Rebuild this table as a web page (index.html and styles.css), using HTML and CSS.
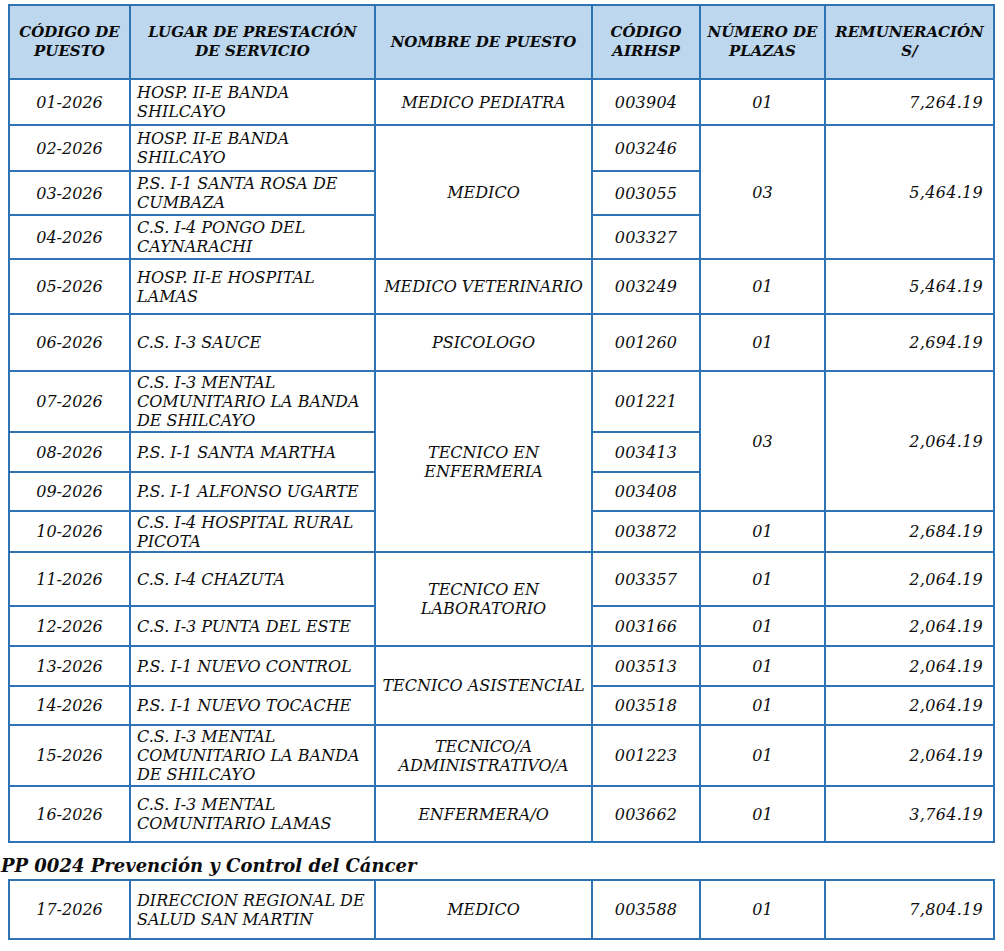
FILE: index.html
```html
<!DOCTYPE html>
<html lang="es">
<head>
<meta charset="utf-8">
<title>Puestos</title>
<link rel="stylesheet" href="styles.css">
</head>
<body>
<table class="grid">
  <colgroup>
    <col class="c1"><col class="c2"><col class="c3"><col class="c4"><col class="c5"><col class="c6">
  </colgroup>
  <thead>
    <tr class="h74">
      <th>CÓDIGO DE<br>PUESTO</th>
      <th>LUGAR DE PRESTACIÓN<br>DE SERVICIO</th>
      <th>NOMBRE DE PUESTO</th>
      <th>CÓDIGO<br>AIRHSP</th>
      <th>NÚMERO DE<br>PLAZAS</th>
      <th>REMUNERACIÓN<br>S/</th>
    </tr>
  </thead>
  <tbody>
    <tr class="h46">
      <td class="code">01-2026</td><td class="place">HOSP. II-E BANDA<br>SHILCAYO</td><td class="name">MEDICO PEDIATRA</td><td class="air">003904</td><td class="num">01</td><td class="pay">7,264.19</td>
    </tr>
    <tr class="h46">
      <td class="code">02-2026</td><td class="place">HOSP. II-E BANDA<br>SHILCAYO</td><td class="name" rowspan="3">MEDICO</td><td class="air">003246</td><td class="num" rowspan="3">03</td><td class="pay" rowspan="3">5,464.19</td>
    </tr>
    <tr class="h44">
      <td class="code">03-2026</td><td class="place">P.S. I-1 SANTA ROSA DE<br>CUMBAZA</td><td class="air">003055</td>
    </tr>
    <tr class="h44">
      <td class="code">04-2026</td><td class="place">C.S. I-4 PONGO DEL<br>CAYNARACHI</td><td class="air">003327</td>
    </tr>
    <tr class="h55">
      <td class="code">05-2026</td><td class="place">HOSP. II-E HOSPITAL<br>LAMAS</td><td class="name">MEDICO VETERINARIO</td><td class="air">003249</td><td class="num">01</td><td class="pay">5,464.19</td>
    </tr>
    <tr class="h57">
      <td class="code">06-2026</td><td class="place">C.S. I-3 SAUCE</td><td class="name">PSICOLOGO</td><td class="air">001260</td><td class="num">01</td><td class="pay">2,694.19</td>
    </tr>
    <tr class="h61">
      <td class="code">07-2026</td><td class="place">C.S. I-3 MENTAL<br>COMUNITARIO LA BANDA<br>DE SHILCAYO</td><td class="name" rowspan="4">TECNICO EN<br>ENFERMERIA</td><td class="air">001221</td><td class="num" rowspan="3">03</td><td class="pay" rowspan="3">2,064.19</td>
    </tr>
    <tr class="h40">
      <td class="code">08-2026</td><td class="place">P.S. I-1 SANTA MARTHA</td><td class="air">003413</td>
    </tr>
    <tr class="h39">
      <td class="code">09-2026</td><td class="place">P.S. I-1 ALFONSO UGARTE</td><td class="air">003408</td>
    </tr>
    <tr class="h41">
      <td class="code">10-2026</td><td class="place">C.S. I-4 HOSPITAL RURAL<br>PICOTA</td><td class="air">003872</td><td class="num">01</td><td class="pay">2,684.19</td>
    </tr>
    <tr class="h54">
      <td class="code">11-2026</td><td class="place">C.S. I-4 CHAZUTA</td><td class="name" rowspan="2">TECNICO EN<br>LABORATORIO</td><td class="air">003357</td><td class="num">01</td><td class="pay">2,064.19</td>
    </tr>
    <tr class="h40">
      <td class="code">12-2026</td><td class="place">C.S. I-3 PUNTA DEL ESTE</td><td class="air">003166</td><td class="num">01</td><td class="pay">2,064.19</td>
    </tr>
    <tr class="h40">
      <td class="code">13-2026</td><td class="place">P.S. I-1 NUEVO CONTROL</td><td class="name" rowspan="2">TECNICO ASISTENCIAL</td><td class="air">003513</td><td class="num">01</td><td class="pay">2,064.19</td>
    </tr>
    <tr class="h39">
      <td class="code">14-2026</td><td class="place">P.S. I-1 NUEVO TOCACHE</td><td class="air">003518</td><td class="num">01</td><td class="pay">2,064.19</td>
    </tr>
    <tr class="h61">
      <td class="code">15-2026</td><td class="place">C.S. I-3 MENTAL<br>COMUNITARIO LA BANDA<br>DE SHILCAYO</td><td class="name">TECNICO/A<br>ADMINISTRATIVO/A</td><td class="air">001223</td><td class="num">01</td><td class="pay">2,064.19</td>
    </tr>
    <tr class="h56">
      <td class="code">16-2026</td><td class="place">C.S. I-3 MENTAL<br>COMUNITARIO LAMAS</td><td class="name">ENFERMERA/O</td><td class="air">003662</td><td class="num">01</td><td class="pay">3,764.19</td>
    </tr>
  </tbody>
</table>

<h2 class="section">PP 0024 Prevención y Control del Cáncer</h2>

<table class="grid">
  <colgroup>
    <col class="c1"><col class="c2"><col class="c3"><col class="c4"><col class="c5"><col class="c6">
  </colgroup>
  <tbody>
    <tr class="h59">
      <td class="code">17-2026</td><td class="place">DIRECCION REGIONAL DE<br>SALUD SAN MARTIN</td><td class="name">MEDICO</td><td class="air">003588</td><td class="num">01</td><td class="pay">7,804.19</td>
    </tr>
  </tbody>
</table>
</body>
</html>
```

FILE: styles.css
```css
html, body {
  margin: 0;
  padding: 0;
  background: #ffffff;
}

body {
  padding-top: 4px;
  font-family: "DejaVu Serif", "Liberation Serif", serif;
  color: #0d0d0d;
}

.grid {
  border-collapse: collapse;
  table-layout: fixed;
  width: 985px;
  margin-left: 8px;
  font-style: italic;
  font-size: 16px;
  line-height: 19px;
}

.c1 { width: 121px; }
.c2 { width: 245px; }
.c3 { width: 217px; }
.c4 { width: 108px; }
.c5 { width: 125px; }
.c6 { width: 169px; }

.grid th,
.grid td {
  border: 2px solid #2e74b5;
  padding: 0 2px;
  vertical-align: middle;
  white-space: nowrap;
  text-align: center;
}

.grid th {
  background: #bdd7ee;
  font-size: 15px;
  font-weight: bold;
  font-style: italic;
  color: #0a0a0a;
  line-height: 19px;
}

.grid td.place {
  text-align: left;
  padding-left: 6px;
}

.grid td.pay {
  text-align: right;
  padding-right: 10px;
  letter-spacing: 0.3px;
}

.grid td.air {
  letter-spacing: 0.2px;
}

.h74 { height: 74px; }
.h61 { height: 61px; }
.h59 { height: 59px; }
.h57 { height: 57px; }
.h56 { height: 56px; }
.h55 { height: 55px; }
.h54 { height: 54px; }
.h46 { height: 46px; }
.h44 { height: 44px; }
.h41 { height: 41px; }
.h40 { height: 40px; }
.h39 { height: 39px; }

.section {
  margin: 11px 0 1px 1px;
  font-size: 18px;
  line-height: 24px;
  font-style: italic;
  font-weight: bold;
  color: #0d0d0d;
}
```
